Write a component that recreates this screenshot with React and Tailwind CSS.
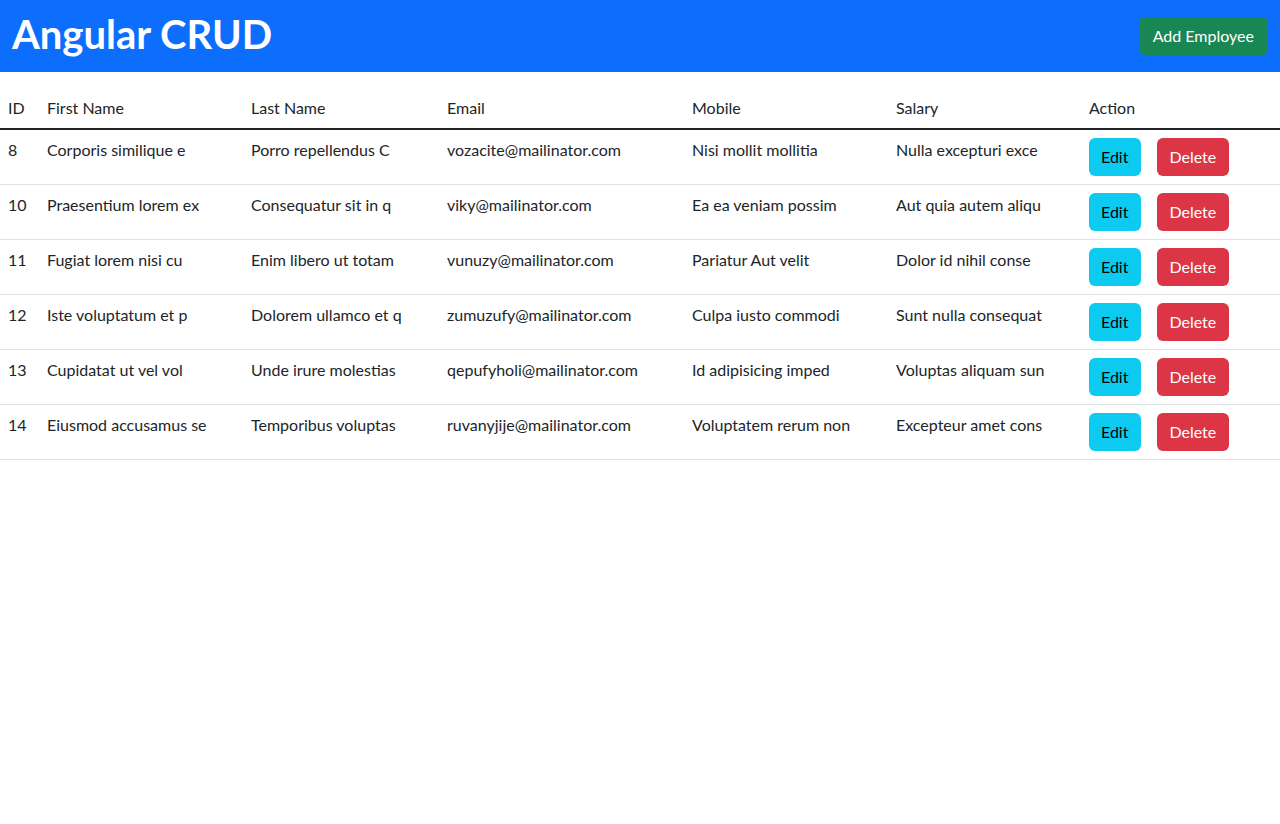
import { useState } from 'react';

const initialEmployees = [
  { id: 8, firstName: 'Corporis similique e', lastName: 'Porro repellendus C', email: 'vozacite@mailinator.com', mobile: 'Nisi mollit mollitia', salary: 'Nulla excepturi exce' },
  { id: 10, firstName: 'Praesentium lorem ex', lastName: 'Consequatur sit in q', email: 'viky@mailinator.com', mobile: 'Ea ea veniam possim', salary: 'Aut quia autem aliqu' },
  { id: 11, firstName: 'Fugiat lorem nisi cu', lastName: 'Enim libero ut totam', email: 'vunuzy@mailinator.com', mobile: 'Pariatur Aut velit', salary: 'Dolor id nihil conse' },
  { id: 12, firstName: 'Iste voluptatum et p', lastName: 'Dolorem ullamco et q', email: 'zumuzufy@mailinator.com', mobile: 'Culpa iusto commodi', salary: 'Sunt nulla consequat' },
  { id: 13, firstName: 'Cupidatat ut vel vol', lastName: 'Unde irure molestias', email: 'qepufyholi@mailinator.com', mobile: 'Id adipisicing imped', salary: 'Voluptas aliquam sun' },
  { id: 14, firstName: 'Eiusmod accusamus se', lastName: 'Temporibus voluptas', email: 'ruvanyjije@mailinator.com', mobile: 'Voluptatem rerum non', salary: 'Excepteur amet cons' },
];

const App = () => {
  const [employees, setEmployees] = useState(initialEmployees);

  const handleDelete = (id) => {
    setEmployees(employees.filter((e) => e.id !== id));
  };

  return (
    <div className="min-h-screen bg-white text-[#212529] font-['Lato',sans-serif]">
      {/* Navbar */}
      <nav className="bg-[#0d6efd] h-[72px] px-3 flex items-center justify-between">
        <h1 className="text-white text-[40px] font-bold leading-none -mt-1">Angular CRUD</h1>
        <button className="bg-[#198754] text-white text-base leading-6 px-[14px] py-[7px] rounded-md">
          Add Employee
        </button>
      </nav>

      {/* Table */}
      <table className="w-full mt-4 text-base leading-6 text-left border-collapse">
        <thead>
          <tr className="border-b-2 border-[#212529]">
            <th className="font-normal p-2 w-[39px]">ID</th>
            <th className="font-normal p-2 w-[204px]">First Name</th>
            <th className="font-normal p-2 w-[196px]">Last Name</th>
            <th className="font-normal p-2 w-[245px]">Email</th>
            <th className="font-normal p-2 w-[204px]">Mobile</th>
            <th className="font-normal p-2 w-[193px]">Salary</th>
            <th className="font-normal p-2">Action</th>
          </tr>
        </thead>
        <tbody>
          {employees.map((emp) => (
            <tr key={emp.id} className="border-b border-[#dee2e6] align-top">
              <td className="p-2">{emp.id}</td>
              <td className="p-2">{emp.firstName}</td>
              <td className="p-2">{emp.lastName}</td>
              <td className="p-2">{emp.email}</td>
              <td className="p-2">{emp.mobile}</td>
              <td className="p-2">{emp.salary}</td>
              <td className="p-2">
                <div className="flex gap-4">
                  <button className="bg-[#0dcaf0] text-black pl-3 pr-[13px] py-[7px] rounded-md">Edit</button>
                  <button
                    onClick={() => handleDelete(emp.id)}
                    className="bg-[#dc3545] text-white pl-3 pr-[13px] py-[7px] rounded-md"
                  >
                    Delete
                  </button>
                </div>
              </td>
            </tr>
          ))}
        </tbody>
      </table>
    </div>
  );
};

export default App;
